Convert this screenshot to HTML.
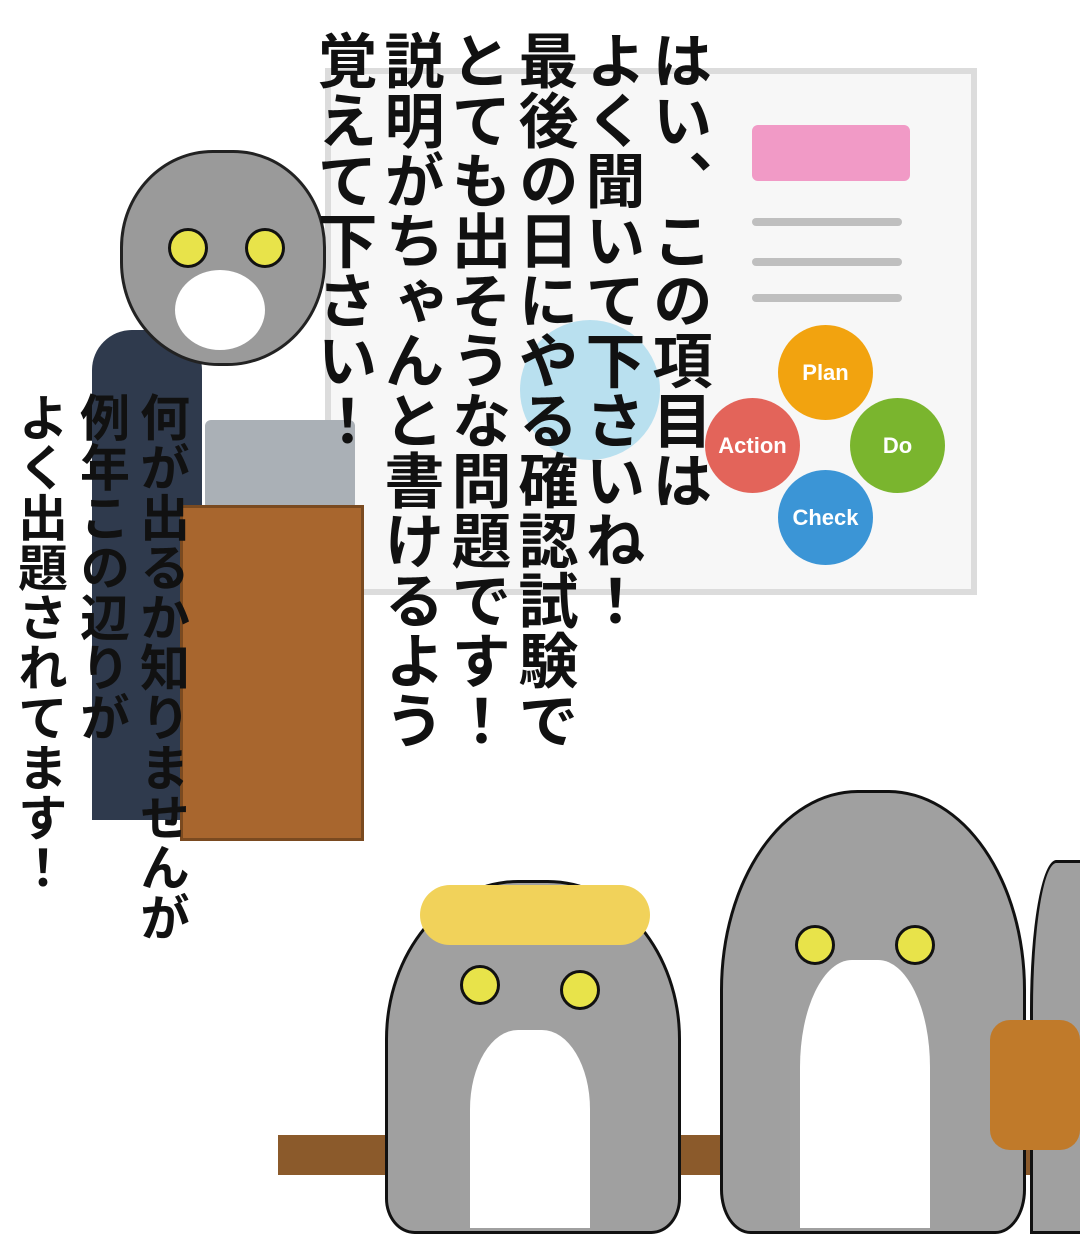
<!DOCTYPE html>
<html><head><meta charset="utf-8"><style>
body{margin:0;width:1080px;height:1228px;position:relative;overflow:hidden;background:#fff;font-family:"Liberation Sans","Noto Sans CJK JP",sans-serif}
.a{position:absolute}
.v{position:absolute;writing-mode:vertical-rl;font-family:"Noto Sans CJK JP",sans-serif;font-weight:700;color:#111;white-space:nowrap;line-height:1}
.c{position:absolute;border-radius:50%;color:#fff;font-weight:bold;display:flex;align-items:center;justify-content:center;font-size:22px}
.eye{position:absolute;width:34px;height:34px;border-radius:50%;background:#e8e34a;border:3px solid #111}
</style></head><body>
<div class="a" style="left:325px;top:68px;width:640px;height:515px;border:6px solid #dcdcdc;background:#f7f7f7"></div>
<div class="a" style="left:752px;top:125px;width:158px;height:56px;background:#f19ac6;border-radius:6px"></div>
<div class="a" style="left:752px;top:218px;width:150px;height:8px;background:#999;opacity:.6;border-radius:4px"></div>
<div class="a" style="left:752px;top:258px;width:150px;height:8px;background:#999;opacity:.6;border-radius:4px"></div>
<div class="a" style="left:752px;top:294px;width:150px;height:8px;background:#999;opacity:.6;border-radius:4px"></div>
<div class="a" style="left:520px;top:320px;width:140px;height:140px;border-radius:50%;background:#8fd0ea;opacity:.6"></div>
<div class="c" style="left:778px;top:325px;width:95px;height:95px;background:#f2a30f">Plan</div>
<div class="c" style="left:850px;top:398px;width:95px;height:95px;background:#7ab52e">Do</div>
<div class="c" style="left:778px;top:470px;width:95px;height:95px;background:#3b95d6">Check</div>
<div class="c" style="left:705px;top:398px;width:95px;height:95px;background:#e3645a">Action</div>
<div class="a" style="left:92px;top:330px;width:110px;height:490px;background:#2f3a4d;border-radius:40px 40px 0 0"></div>
<div class="a" style="left:120px;top:150px;width:200px;height:210px;background:#9a9a9a;border-radius:45% 45% 48% 48%;border:3px solid #222"></div>
<div class="a" style="left:175px;top:270px;width:90px;height:80px;background:#fff;border-radius:50%"></div>
<div class="eye" style="left:168px;top:228px"></div><div class="eye" style="left:245px;top:228px"></div>
<div class="a" style="left:205px;top:420px;width:150px;height:90px;background:#aab0b6;border-radius:6px"></div>
<div class="a" style="left:180px;top:505px;width:178px;height:330px;background:#a8662e;border:3px solid #7a4a20"></div>
<div class="a" style="left:278px;top:1135px;width:802px;height:40px;background:#8b5a2b"></div>
<div class="a" style="left:385px;top:880px;width:290px;height:348px;background:#a0a0a0;border:3px solid #111;border-radius:45% 45% 10% 10%"></div>
<div class="a" style="left:420px;top:885px;width:230px;height:60px;background:#f1d25a;border-radius:40px"></div>
<div class="a" style="left:470px;top:1030px;width:120px;height:198px;background:#fff;border-radius:40% 40% 0 0"></div>
<div class="eye" style="left:460px;top:965px"></div><div class="eye" style="left:560px;top:970px"></div>
<div class="a" style="left:720px;top:790px;width:300px;height:438px;background:#a0a0a0;border:3px solid #111;border-radius:45% 45% 10% 10%"></div>
<div class="a" style="left:800px;top:960px;width:130px;height:268px;background:#fff;border-radius:40% 40% 0 0"></div>
<div class="eye" style="left:795px;top:925px"></div><div class="eye" style="left:895px;top:925px"></div>
<div class="a" style="left:1030px;top:860px;width:60px;height:368px;background:#a0a0a0;border:3px solid #111;border-radius:40% 0 0 0"></div>
<div class="a" style="left:990px;top:1020px;width:90px;height:130px;background:#c07a2a;border-radius:20px"></div>
<div class="v" style="left:652px;top:30px;font-size:60px">はい、この項目は</div>
<div class="v" style="left:585px;top:30px;font-size:60px">よく聞いて下さいね！</div>
<div class="v" style="left:518px;top:30px;font-size:60px">最後の日にやる確認試験で</div>
<div class="v" style="left:451px;top:30px;font-size:60px">とても出そうな問題です！</div>
<div class="v" style="left:384px;top:30px;font-size:60px">説明がちゃんと書けるよう</div>
<div class="v" style="left:317px;top:30px;font-size:60px">覚えて下さい！</div>
<div class="v" style="left:140px;top:392px;font-size:50px">何が出るか知りませんが</div>
<div class="v" style="left:80px;top:392px;font-size:50px">例年この辺りが</div>
<div class="v" style="left:18px;top:392px;font-size:50px">よく出題されてます！</div>
</body></html>
